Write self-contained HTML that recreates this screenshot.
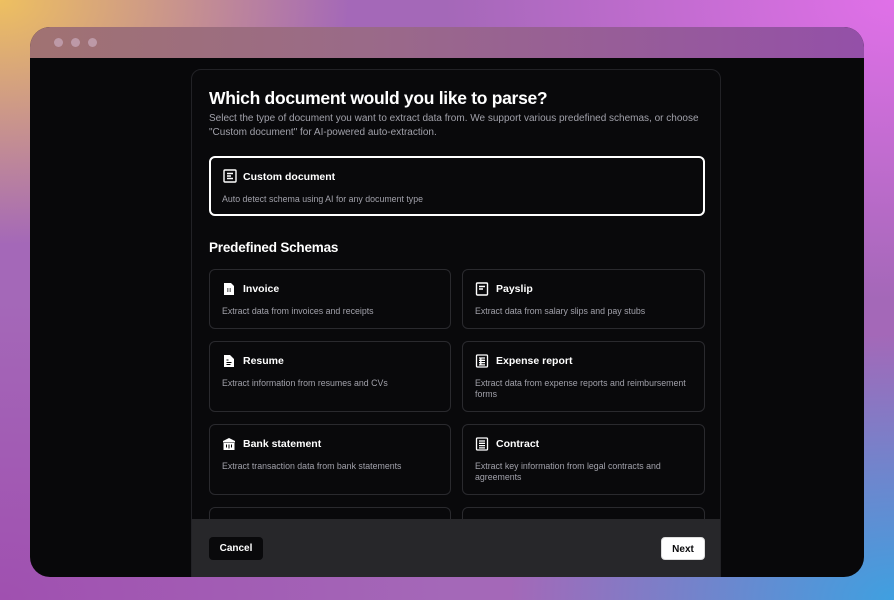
<!DOCTYPE html>
<html><head><meta charset="utf-8"><style>
*{box-sizing:border-box;margin:0;padding:0}
body{width:894px;height:600px;overflow:hidden;font-family:"Liberation Sans",sans-serif;
background:
radial-gradient(ellipse 500px 350px at 0% 0%, #eec060 0%, rgba(238,192,96,0) 70%),
radial-gradient(ellipse 550px 380px at 100% 100%, #3fa0e0 0%, rgba(63,160,224,0) 70%),
radial-gradient(ellipse 600px 400px at 100% 0%, #e070e8 0%, rgba(224,112,232,0) 75%),
radial-gradient(ellipse 600px 400px at 0% 100%, #a050b0 0%, rgba(160,80,176,0) 75%),
#a468b8;position:relative}
.win{position:absolute;left:30px;top:27px;width:834px;height:550px;border-radius:20px;overflow:hidden;background:#08080a}
.bar{height:31px;background:linear-gradient(90deg,#a07272,#9a6a88 40%,#9450a8);position:relative}
.dot{position:absolute;top:11px;width:9px;height:9px;border-radius:50%;background:#c4a4b4;opacity:.8}
.modal{position:absolute;left:161px;top:42px;width:530px;height:520px;border:1px solid #222226;border-radius:10px;background:#09090b;overflow:hidden}
h1{position:absolute;left:17px;top:18px;color:#fff;font-size:17.5px;font-weight:bold;letter-spacing:-0.3px}
.sub{position:absolute;left:17px;top:42px;width:505px;color:#a1a1aa;font-size:10px;line-height:14px}
.card{position:absolute;border:1px solid #2a2a2e;border-radius:6px;background:#09090b}
.card.sel{border:2px solid #fff}
.t{position:absolute;left:33px;top:13px;color:#fff;font-size:10.5px;font-weight:bold}
.d{position:absolute;left:12px;top:36px;right:10px;color:#a1a1aa;font-size:8.8px;line-height:11px}
.ic{position:absolute;left:12px;top:12px;width:14px;height:14px}
h2{position:absolute;left:17px;top:170px;color:#fff;font-size:13.5px;font-weight:bold;letter-spacing:-0.2px}
.foot{position:absolute;left:0;top:449px;width:530px;height:70px;background:#27272a}
.btn{position:absolute;top:18px;height:23px;border-radius:4px;font-size:10px;font-weight:bold;line-height:23px;text-align:center}
</style></head><body>
<div class="win">
<div class="bar"><div class="dot" style="left:24px"></div><div class="dot" style="left:41px"></div><div class="dot" style="left:58px"></div></div>
<div class="modal">
<h1>Which document would you like to parse?</h1>
<div class="sub">Select the type of document you want to extract data from. We support various predefined schemas, or choose "Custom document" for AI-powered auto-extraction.</div>
<div class="card sel" style="left:17px;top:86px;width:496px;height:60px">
<svg class="ic" style="left:12px;top:11px" viewBox="0 0 14 14" fill="none" stroke="#fff" stroke-width="1.4"><rect x="1" y="1" width="12" height="12" rx="1"/><path d="M4 4.5h6M4 7h4M4 9.5h6"/></svg>
<div class="t" style="left:32px;top:13px">Custom document</div><div class="d" style="top:36px;left:11px">Auto detect schema using AI for any document type</div></div>
<h2>Predefined Schemas</h2>

<div class="card" style="left:17px;top:199px;width:242px;height:60px">
<svg class="ic" viewBox="0 0 14 14"><path d="M2 1h7l3 3v9H2z" fill="#fff"/><path d="M5 7h1.5M7.5 7h1.5M5 9h1.5M7.5 9h1.5" stroke="#000" stroke-width="1"/></svg>
<div class="t">Invoice</div><div class="d">Extract data from invoices and receipts</div></div>
<div class="card" style="left:270px;top:199px;width:243px;height:60px">
<svg class="ic" viewBox="0 0 14 14" fill="none" stroke="#fff" stroke-width="1.4"><rect x="1.5" y="1" width="11" height="12" rx="1"/><path d="M4 4.5h6M4 7h4"/></svg>
<div class="t">Payslip</div><div class="d">Extract data from salary slips and pay stubs</div></div>

<div class="card" style="left:17px;top:271px;width:242px;height:71px">
<svg class="ic" viewBox="0 0 14 14"><path d="M2 1h6l4 4v8H2z" fill="#fff"/><path d="M4.5 6h2M4.5 8.5h5M4.5 10.5h4" stroke="#000" stroke-width="1"/></svg>
<div class="t">Resume</div><div class="d">Extract information from resumes and CVs</div></div>
<div class="card" style="left:270px;top:271px;width:243px;height:71px">
<svg class="ic" viewBox="0 0 14 14" fill="none" stroke="#fff" stroke-width="1.3"><rect x="1.5" y="1" width="11" height="12" rx="1"/><path d="M4 4h6M4 6.3h6M4 8.6h6M4 10.9h6M5.8 4v7"/></svg>
<div class="t">Expense report</div><div class="d">Extract data from expense reports and reimbursement forms</div></div>

<div class="card" style="left:17px;top:354px;width:242px;height:71px">
<svg class="ic" viewBox="0 0 14 14"><path d="M7 1L1 4v1.5h12V4z" fill="#fff"/><rect x="1.5" y="6" width="11" height="7" fill="#fff"/><path d="M4.5 7.5v3M7 7.5v4M9.5 7.5v3" stroke="#000" stroke-width="1"/></svg>
<div class="t">Bank statement</div><div class="d">Extract transaction data from bank statements</div></div>
<div class="card" style="left:270px;top:354px;width:243px;height:71px">
<svg class="ic" viewBox="0 0 14 14" fill="none" stroke="#fff" stroke-width="1.3"><rect x="1.5" y="1" width="11" height="12" rx="1"/><path d="M4 4h6M4 6.3h6M4 8.6h6M4 10.9h6"/></svg>
<div class="t">Contract</div><div class="d">Extract key information from legal contracts and agreements</div></div>

<div class="card" style="left:17px;top:437px;width:242px;height:71px"></div>
<div class="card" style="left:270px;top:437px;width:243px;height:71px"></div>

<div class="foot">
<div class="btn" style="left:17px;width:54px;background:#09090b;color:#fff">Cancel</div>
<div class="btn" style="left:469px;width:44px;background:#fff;color:#09090b;border:1px solid #ddd">Next</div>
</div>
</div>
</div>
</body></html>
